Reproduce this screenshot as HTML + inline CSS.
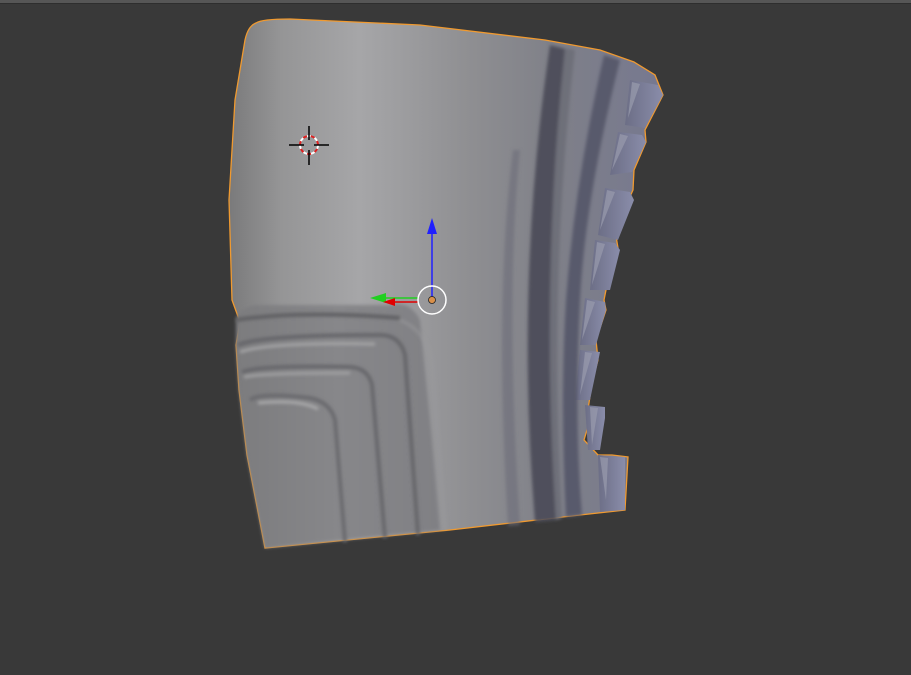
<!DOCTYPE html>
<html><head><style>html,body{margin:0;padding:0;background:#393939;width:911px;height:675px;overflow:hidden}</style></head>
<body>
<svg width="911" height="675" viewBox="0 0 911 675" xmlns="http://www.w3.org/2000/svg" style="display:block">
<defs>
<linearGradient id="body" x1="0" y1="0" x2="1" y2="0">
<stop offset="0" stop-color="#7a7a7b"/>
<stop offset="0.12" stop-color="#959596"/>
<stop offset="0.3" stop-color="#a6a6a8"/>
<stop offset="0.55" stop-color="#8f8f92"/>
<stop offset="0.75" stop-color="#7f8088"/>
<stop offset="1" stop-color="#767890"/>
</linearGradient>
<linearGradient id="low" x1="0" y1="0" x2="1" y2="0">
<stop offset="0" stop-color="#7c7c7e"/>
<stop offset="0.5" stop-color="#87878a"/>
<stop offset="1" stop-color="#808084"/>
</linearGradient>
<linearGradient id="tooth" x1="0" y1="0" x2="1" y2="0">
<stop offset="0" stop-color="#6c6e86"/>
<stop offset="1" stop-color="#8a8daa"/>
</linearGradient>
<filter id="bl"><feGaussianBlur stdDeviation="1.5"/></filter>
</defs>
<rect x="0" y="0" width="911" height="3" fill="#565656"/>
<rect x="0" y="3" width="911" height="1" fill="#2e2e2e"/>
<path d="M256,23 Q262,19 290,19 L420,25 L545,40 L600,50 L634,62 L655,75 L663,95 L645,130 L646,142 L634,170 L633,190 L615,230 L618,248 L610,270 L604,300 L606,310 L596,340 L598,360 L592,382 L588,410 L590,420 L584,440 L598,455 L612,455 L628,457 L625,510 L580,515 L450,530 L265,548 L247,455 L239,390 L236,345 L240,322 L232,300 L229,200 L235,100 L245,40 Q248,26 256,23 Z" fill="url(#body)" stroke="#f09a30" stroke-width="1.3"/>
<g fill="url(#tooth)">
<path d="M630,80 L658,85 L663,95 L645,128 L625,125 Z"/>
<path d="M618,132 L642,135 L646,142 L632,172 L610,175 Z"/>
<path d="M605,188 L630,192 L634,200 L618,240 L598,235 Z"/>
<path d="M595,240 L615,243 L620,250 L610,290 L590,290 Z"/>
<path d="M585,298 L605,302 L606,310 L596,345 L580,345 Z"/>
<path d="M580,350 L600,352 L598,362 L590,400 L575,400 Z"/>
<path d="M585,405 L605,407 L605,418 L600,450 L588,450 Z"/>
<path d="M598,455 L625,457 L625,510 L600,512 Z"/>
</g>
<g fill="#9a9cae" opacity="0.7">
<path d="M632,82 L640,84 L628,118 Z"/><path d="M620,134 L628,136 L612,170 Z"/>
<path d="M607,190 L615,192 L600,230 Z"/><path d="M597,242 L605,244 L592,285 Z"/>
<path d="M587,300 L595,302 L582,340 Z"/><path d="M585,352 L592,353 L580,395 Z"/>
<path d="M590,407 L598,408 L592,445 Z"/><path d="M600,457 L608,458 L606,500 Z"/>
</g>
<g filter="url(#bl)">
<path d="M550,45 L570,50 Q540,280 556,520 L535,522 Q515,280 550,45 Z" fill="#4f505c"/>
<path d="M565,48 L575,50 Q548,280 562,518 L556,520 Q540,280 565,48 Z" fill="#6e6f79"/>
<path d="M604,55 L620,60 Q585,200 580,300 Q574,420 582,515 L566,517 Q560,400 566,300 Q575,180 604,55 Z" fill="#585a6c"/>
<path d="M520,150 Q505,300 520,525 L508,526 Q494,300 513,150 Z" fill="#6c6d78" opacity="0.6"/>
</g>
<path d="M236,320 Q240,305 260,305 L390,305 Q410,300 420,320 L432,440 L440,530 L265,548 L247,455 L239,390 L236,345 Z" fill="url(#low)" filter="url(#bl)"/>
<g filter="url(#bl)" fill="none">
<path d="M236,320 Q300,310 400,318" stroke="#606063" stroke-width="4"/>
<path d="M238,345 Q260,335 380,335 Q400,335 405,355 L418,535" stroke="#66666a" stroke-width="4"/>
<path d="M240,352 Q270,342 375,344" stroke="#a4a4a6" stroke-width="3"/>
<path d="M242,372 Q260,365 350,367 Q368,368 372,385 L385,538" stroke="#68686c" stroke-width="4"/>
<path d="M244,377 Q262,373 350,373" stroke="#a0a0a2" stroke-width="3"/>
<path d="M250,400 Q260,392 310,398 Q330,402 335,420 L345,542" stroke="#6a6a6e" stroke-width="4"/>
<path d="M258,403 Q300,399 318,409" stroke="#aaaaac" stroke-width="3"/>
<path d="M400,320 Q425,330 432,360 L445,530" stroke="#9a9a9d" stroke-width="3" opacity="0.6"/>
</g>
<g>
<circle cx="309" cy="145" r="9" fill="none" stroke="#ffffff" stroke-width="2" stroke-dasharray="4 4"/>
<circle cx="309" cy="145" r="9" fill="none" stroke="#e02020" stroke-width="2" stroke-dasharray="4 4" stroke-dashoffset="4"/>
<path d="M289,145 L304,145 M314,145 L329,145 M309,126 L309,140 M309,150 L309,165" stroke="#000" stroke-width="1.5"/>
</g>
<line x1="432" y1="300" x2="432" y2="232" stroke="#2020ff" stroke-width="1.5"/>
<path d="M427,234 L432,218 L437,234 Z" fill="#2020ff"/>
<line x1="419" y1="298" x2="380" y2="298" stroke="#20d020" stroke-width="1.5"/>
<path d="M386,293 L370,298 L386,303 Z" fill="#20d020"/>
<line x1="419" y1="302" x2="392" y2="302" stroke="#e00000" stroke-width="1.5"/>
<path d="M395,298 L383,302 L395,306 Z" fill="#e00000"/>
<circle cx="432" cy="300" r="14" fill="none" stroke="#ffffff" stroke-width="1.5"/>
<circle cx="432" cy="300" r="3.5" fill="#d9904a" stroke="#222" stroke-width="0.8"/>
</svg>
</body></html>
